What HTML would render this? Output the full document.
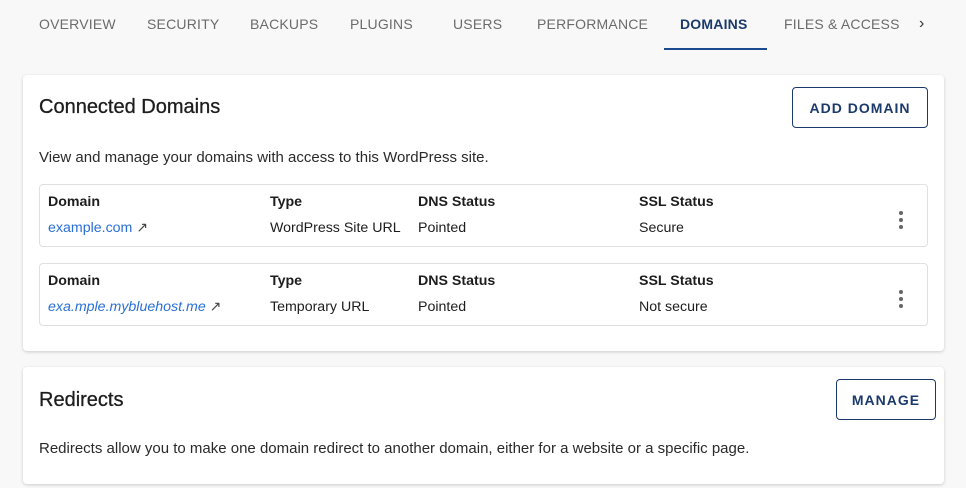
<!DOCTYPE html>
<html><head><style>
*{box-sizing:border-box;margin:0;padding:0}
body{width:966px;height:488px;background:#f8f8f8;font-family:"Liberation Sans",sans-serif;color:#1d1d1d;position:relative;overflow:hidden}
.tab{position:absolute;top:16px;font-size:14px;color:#6b6b6b;letter-spacing:.2px;white-space:nowrap}
.tab.act{color:#1b3a6b;font-weight:bold}
.ul{position:absolute;left:664px;top:48px;width:103px;height:2px;background:#1b4b8e}
.card{position:absolute;left:23px;width:921px;background:#fff;border-radius:4px;box-shadow:0 1px 3px rgba(0,0,0,.18)}
h2{position:absolute;left:16px;font-size:20px;font-weight:normal;color:#1d1d1d;-webkit-text-stroke:.3px #1d1d1d}
.btn{position:absolute;border:1px solid #1b3a6b;border-radius:4px;color:#1b3a6b;font-weight:bold;font-size:14px;letter-spacing:1px;display:flex;align-items:center;justify-content:center}
.p{position:absolute;left:16px;font-size:15px;color:#2a2a2a}
.row{position:absolute;left:16px;width:889px;height:63px;border:1px solid #e0e0e0;border-radius:4px}
.c{position:absolute;font-size:14.2px;white-space:nowrap}
.h{top:9px;font-weight:bold}
.v{top:35px}
a{color:#2a6fd6;text-decoration:none}
.dots{position:absolute;right:24px;top:26px;width:4px}
.dots i{display:block;width:4px;height:4px;border-radius:2px;background:#666;margin-bottom:3px}
</style></head><body>
<div class="tab" style="left:39px">OVERVIEW</div>
<div class="tab" style="left:147px">SECURITY</div>
<div class="tab" style="left:250px">BACKUPS</div>
<div class="tab" style="left:350px">PLUGINS</div>
<div class="tab" style="left:453px">USERS</div>
<div class="tab" style="left:537px">PERFORMANCE</div>
<div class="tab act" style="left:680px">DOMAINS</div>
<div class="tab" style="left:784px">FILES &amp; ACCESS</div>
<div class="tab" style="left:919px;color:#333;font-size:16px;top:15px">›</div>
<div class="ul"></div>

<div class="card" style="top:75px;height:276px">
<h2 style="top:21px">Connected Domains</h2>
<div class="btn" style="left:769px;top:12px;width:136px;height:41px">ADD DOMAIN</div>
<div class="p" style="top:74px">View and manage your domains with access to this WordPress site.</div>
<div class="row" style="top:109px">
<div class="c h" style="left:8px">Domain</div><div class="c v" style="left:8px"><a>example.com</a> <span style="color:#444">↗</span></div>
<div class="c h" style="left:230px">Type</div><div class="c v" style="left:230px">WordPress Site URL</div>
<div class="c h" style="left:378px">DNS Status</div><div class="c v" style="left:378px">Pointed</div>
<div class="c h" style="left:599px">SSL Status</div><div class="c v" style="left:599px">Secure</div>
<div class="dots"><i></i><i></i><i></i></div>
</div>
<div class="row" style="top:188px">
<div class="c h" style="left:8px">Domain</div><div class="c v" style="left:8px"><a style="font-style:italic">exa.mple.mybluehost.me</a> <span style="color:#444">↗</span></div>
<div class="c h" style="left:230px">Type</div><div class="c v" style="left:230px">Temporary URL</div>
<div class="c h" style="left:378px">DNS Status</div><div class="c v" style="left:378px">Pointed</div>
<div class="c h" style="left:599px">SSL Status</div><div class="c v" style="left:599px">Not secure</div>
<div class="dots"><i></i><i></i><i></i></div>
</div>
</div>

<div class="card" style="top:367px;height:117px">
<h2 style="top:22px">Redirects</h2>
<div class="btn" style="left:813px;top:12px;width:100px;height:41px">MANAGE</div>
<div class="p" style="top:73px">Redirects allow you to make one domain redirect to another domain, either for a website or a specific page.</div>
</div>
</body></html>
